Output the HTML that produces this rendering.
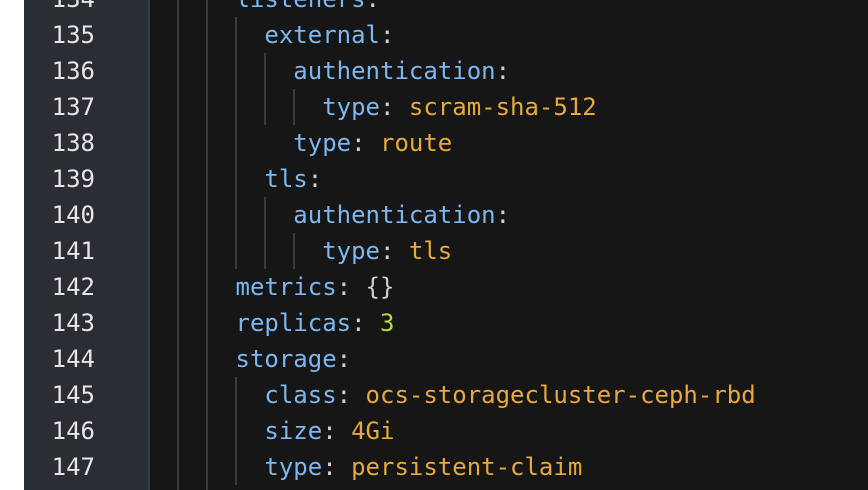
<html><head><style>
body{margin:0;width:868px;height:490px;overflow:hidden;background:#fff;position:relative;font-family:"DejaVu Sans Mono","Liberation Mono",monospace;font-size:24px}
.g{position:absolute;left:24px;top:0;width:124px;height:490px;background:#2a2d33}
.b{position:absolute;left:148px;top:0;width:2px;height:490px;background:#3a3d42}
.c{position:absolute;left:150px;top:0;width:718px;height:490px;background:#161616}
.l{position:absolute;height:36px;line-height:36px;white-space:pre}
.n{left:24px;width:71px;text-align:right;color:#e6e6e6}
.t{left:148.8px;color:#d0d0d0}
.k{color:#7cb7ef}.v{color:#e8a93c}.p{color:#cfcfcf}.num{color:#b5d846}
.v1{position:absolute;width:2px;background:#3b3b3b}
</style></head><body>
<div class="g"></div><div class="b"></div><div class="c"></div>
<div class="v1" style="left:177px;top:0;height:490px"></div>
<div class="v1" style="left:206px;top:0;height:490px"></div>
<div class="v1" style="left:235px;top:17px;height:252px"></div>
<div class="v1" style="left:264px;top:53px;height:72px"></div>
<div class="v1" style="left:293px;top:89px;height:36px"></div>
<div class="v1" style="left:264px;top:197px;height:72px"></div>
<div class="v1" style="left:293px;top:233px;height:36px"></div>
<div class="v1" style="left:235px;top:377px;height:108px"></div>
<div class="l n" style="top:-19px">134</div><div class="l t" style="top:-19px">      <span class="k">listeners</span><span class="p">:</span></div>
<div class="l n" style="top:17px">135</div><div class="l t" style="top:17px">        <span class="k">external</span><span class="p">:</span></div>
<div class="l n" style="top:53px">136</div><div class="l t" style="top:53px">          <span class="k">authentication</span><span class="p">:</span></div>
<div class="l n" style="top:89px">137</div><div class="l t" style="top:89px">            <span class="k">type</span><span class="p">: </span><span class="v">scram-sha-512</span></div>
<div class="l n" style="top:125px">138</div><div class="l t" style="top:125px">          <span class="k">type</span><span class="p">: </span><span class="v">route</span></div>
<div class="l n" style="top:161px">139</div><div class="l t" style="top:161px">        <span class="k">tls</span><span class="p">:</span></div>
<div class="l n" style="top:197px">140</div><div class="l t" style="top:197px">          <span class="k">authentication</span><span class="p">:</span></div>
<div class="l n" style="top:233px">141</div><div class="l t" style="top:233px">            <span class="k">type</span><span class="p">: </span><span class="v">tls</span></div>
<div class="l n" style="top:269px">142</div><div class="l t" style="top:269px">      <span class="k">metrics</span><span class="p">: {}</span></div>
<div class="l n" style="top:305px">143</div><div class="l t" style="top:305px">      <span class="k">replicas</span><span class="p">: </span><span class="num">3</span></div>
<div class="l n" style="top:341px">144</div><div class="l t" style="top:341px">      <span class="k">storage</span><span class="p">:</span></div>
<div class="l n" style="top:377px">145</div><div class="l t" style="top:377px">        <span class="k">class</span><span class="p">: </span><span class="v">ocs-storagecluster-ceph-rbd</span></div>
<div class="l n" style="top:413px">146</div><div class="l t" style="top:413px">        <span class="k">size</span><span class="p">: </span><span class="v">4Gi</span></div>
<div class="l n" style="top:449px">147</div><div class="l t" style="top:449px">        <span class="k">type</span><span class="p">: </span><span class="v">persistent-claim</span></div>
</body></html>
